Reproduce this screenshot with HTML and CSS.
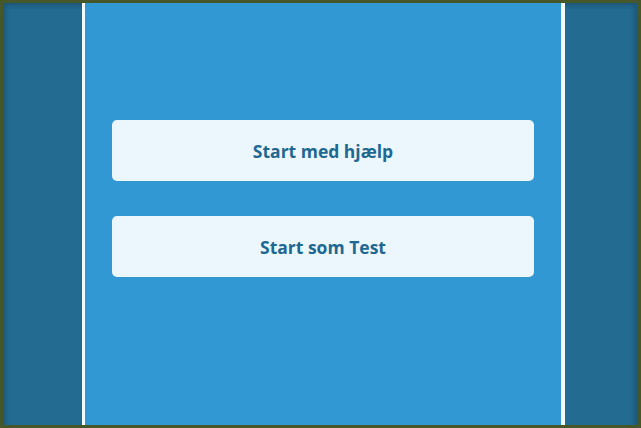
FILE: index.html
```html
<!DOCTYPE html>
<html>
<head>
<meta charset="utf-8">
<link rel="stylesheet" href="styles.css">
</head>
<body>
<div class="frame">
  <div class="side side-left"></div>
  <div class="rule"></div>
  <main class="center">
    <button class="btn">Start med hjælp</button>
    <button class="btn">Start som Test</button>
  </main>
  <div class="rule"></div>
  <div class="side side-right"></div>
</div>
</body>
</html>
```
FILE: styles.css
```css
html, body {
  margin: 0;
  padding: 0;
}
.frame {
  box-sizing: border-box;
  width: 641px;
  height: 428px;
  border-style: solid;
  border-color: #465829;
  border-width: 3px 4px 3px 3px;
  display: grid;
  grid-template-columns: 79px 3px 1fr 4px 72px;
  background: #236b91;
}
.side {
  background: #236b91;
}
.side-left {
  box-shadow: inset 3px 3px 4px rgba(0,0,0,0.18);
}
.side-right {
  box-shadow: inset -3px 3px 4px rgba(0,0,0,0.18);
}
.rule {
  background: #f4fbff;
}
.center {
  background: #3298d3;
  display: flex;
  flex-direction: column;
  align-items: center;
  padding-top: 117px;
  gap: 35px;
}
.btn {
  width: 422px;
  height: 61px;
  border: none;
  border-radius: 5px;
  background: #ebf6fd;
  color: #1e6891;
  font-family: "Open Sans", sans-serif;
  font-weight: 700;
  font-size: 17.5px;
  padding: 0;
  cursor: pointer;
}
```
